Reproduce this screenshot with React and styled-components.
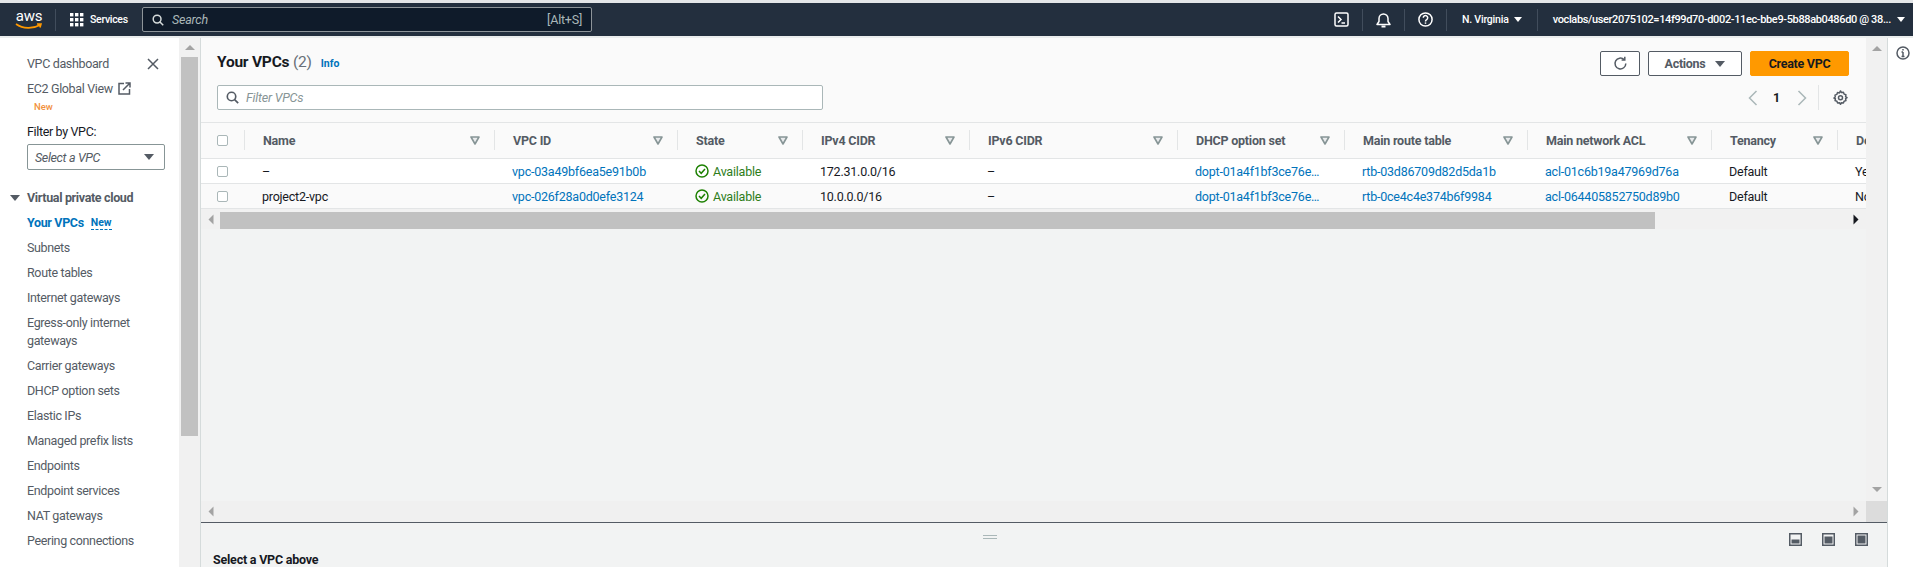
import styled, { createGlobalStyle } from 'styled-components'

const GlobalStyle = createGlobalStyle`
  html, body { margin: 0; padding: 0; overflow: hidden; }
  body { font-family: Roboto, "Liberation Sans", sans-serif; font-size: 12.5px; letter-spacing: -0.22px; color: #16191f; }
  * { box-sizing: border-box; }
`

const COLUMNS = '44px 250px 183px 125px 167px 208px 167px 183px 184px 126px 120px'

const Page = styled.div`
  width: 1913px;
  height: 567px;
  display: flex;
  flex-direction: column;
  overflow: hidden;
  background: #f2f3f3;
`
const TopStrip = styled.div`
  height: 3px;
  background: #e4e6e8;
  flex: none;
`
const Header = styled.header`
  height: 33px;
  flex: none;
  background: #232f3e;
  display: flex;
  align-items: center;
  color: #fff;
  padding-left: 15px;
`
const Logo = styled.div`
  width: 28px;
  height: 22px;
  color: #fff;
  font-size: 15px;
  line-height: 15px;
  text-align: center;
  letter-spacing: -0.3px;
  svg { display: block; margin-top: -1px; }
`
const Divider = styled.span`
  width: 1px;
  height: ${p => p.$h || 22}px;
  background: ${p => p.$color || '#414d5c'};
  margin: ${p => p.$margin || '0'};
  flex: none;
`
const ServicesLabel = styled.span`
  font-size: 10.5px;
  font-weight: 500;
  letter-spacing: -0.3px;
  width: 38px;
  white-space: nowrap;
  margin: 0 14px 0 6px;
`
const SearchBox = styled.div`
  width: 450px;
  height: 25px;
  background: #0f1b2a;
  border: 1px solid #8d9499;
  border-radius: 2px;
  display: flex;
  align-items: center;
  padding: 0 9px;
  color: #aab7b8;
  font-size: 12.5px;
`
const SearchText = styled.span`
  font-style: italic;
  margin-left: 8px;
  flex: 1;
`
const HeaderRight = styled.div`
  margin-left: auto;
  display: flex;
  align-items: center;
  font-weight: 500;
`
const Region = styled.span`
  font-size: 10.5px;
  letter-spacing: -0.2px;
  white-space: nowrap;
`
const Account = styled.span`
  font-size: 11px;
  letter-spacing: -0.36px;
  white-space: nowrap;
`
const Caret = styled.span`
  width: 0;
  height: 0;
  flex: none;
  border-left: ${p => p.$size || 4}px solid transparent;
  border-right: ${p => p.$size || 4}px solid transparent;
  border-top: ${p => (p.$size || 4) + 1}px solid ${p => p.$color || '#fff'};
  margin: ${p => p.$margin || '0'};
`
const LightLine = styled.div`
  height: 2px;
  flex: none;
  background: #eaeded;
`
const Body = styled.div`
  flex: 1;
  display: flex;
  min-height: 0;
`
const Sidebar = styled.nav`
  width: 179px;
  flex: none;
  background: #fff;
  padding: 13px 20px 0 27px;
  color: #545b64;
  font-size: 12.5px;
  letter-spacing: -0.35px;
`
const NavRow = styled.div`
  height: 25px;
  line-height: 25px;
  white-space: nowrap;
  display: flex;
  align-items: center;
  color: ${p => (p.$active ? '#0073bb' : '#545b64')};
  font-weight: ${p => (p.$active ? 700 : 400)};
`
const NavTall = styled.div`
  line-height: 18px;
  padding: 4px 0 3px;
`
const CloseWrap = styled.span`
  margin-left: auto;
  display: flex;
`
const NewTag = styled.div`
  color: #f2913d;
  font-size: 9.5px;
  font-weight: 500;
  letter-spacing: 0;
  margin: -1px 0 0 7px;
  height: 20px;
  line-height: 14px;
`
const FilterLabel = styled.div`
  line-height: 18px;
  margin-top: 3px;
  color: #16191f;
`
const SelectBox = styled.div`
  width: 138px;
  height: 26px;
  margin: 3px 0 15px;
  border: 1px solid #879596;
  border-radius: 2px;
  display: flex;
  align-items: center;
  justify-content: space-between;
  padding: 0 10px 0 7px;
  font-style: italic;
  color: #545b64;
`
const NavSection = styled.div`
  margin-left: -17px;
  display: flex;
  align-items: center;
  height: 25px;
  font-weight: 700;
  color: #545b64;
  gap: 7px;
  white-space: nowrap;
`
const NavNew = styled.span`
  font-size: 10.5px;
  font-weight: 700;
  letter-spacing: 0;
  margin-left: 7px;
  line-height: 13px;
  border-bottom: 1px dashed #0073bb;
`
const SideScroll = styled.div`
  width: 22px;
  flex: none;
  background: #f1f1f1;
  border-right: 1px solid #d5dbdb;
  padding: 0 2px;
`
const ArrowCell = styled.div`
  height: ${p => p.$h || 19}px;
  display: flex;
  align-items: center;
  justify-content: center;
`
const Triangle = styled.span`
  width: 0;
  height: 0;
  border-left: 5px solid transparent;
  border-right: 5px solid transparent;
  border-bottom: 5px solid ${p => p.$color || '#a3a3a3'};
  transform: rotate(${p => p.$rotate || 0}deg);
`
const SideThumb = styled.div`
  height: 379px;
  width: 17px;
  background: #c1c1c1;
`
const Main = styled.main`
  flex: 1;
  min-width: 0;
  display: flex;
  flex-direction: column;
`
const MainScrollArea = styled.div`
  display: flex;
  height: 484px;
  flex: none;
  flex-direction: column;
`
const MainUpper = styled.div`
  height: 463px;
  display: flex;
  flex: none;
`
const Content = styled.div`
  flex: 1;
  min-width: 0;
  display: flex;
  flex-direction: column;
  overflow: hidden;
`
const TableHead = styled.div`
  height: 85px;
  flex: none;
  background: #fafafa;
  border-bottom: 1px solid #e3e5e6;
  padding: 13px 17px 0 16px;
  display: grid;
  grid-template-columns: 1fr auto;
  grid-template-rows: 25px 25px;
  row-gap: 9px;
`
const Title = styled.h1`
  margin: -1px 0 0;
  font-size: 15.5px;
  font-weight: 700;
  line-height: 25px;
  color: #16191f;
  span { font-weight: 400; color: #687078; }
`
const InfoLink = styled.a`
  color: #0073bb;
  font-size: 10.5px;
  font-weight: 700;
  letter-spacing: 0;
  margin-left: 9px;
`
const ActionBar = styled.div`
  display: flex;
  gap: 8px;
`
const Button = styled.button`
  height: 25px;
  width: ${p => p.$w}px;
  border-radius: 2px;
  border: 1px solid ${p => (p.$primary ? '#ff9900' : '#545b64')};
  background: ${p => (p.$primary ? '#ff9900' : '#fff')};
  color: ${p => (p.$primary ? '#16191f' : '#545b64')};
  font: 700 12.5px Roboto, sans-serif;
  letter-spacing: -0.3px;
  display: flex;
  align-items: center;
  justify-content: center;
  padding: 0;
`
const FilterInput = styled.div`
  width: 606px;
  height: 25px;
  background: #fff;
  border: 1px solid #aab7b8;
  border-radius: 2px;
  display: flex;
  align-items: center;
  padding: 0 8px;
  color: #879596;
  font-style: italic;
  gap: 7px;
`
const Pager = styled.div`
  display: flex;
  align-items: center;
  height: 25px;
  padding-right: 1px;
  justify-content: flex-end;
`
const PageNum = styled.span`
  font-weight: 700;
  margin: 0 17px 0 15px;
  color: #16191f;
`
const Row = styled.div`
  display: grid;
  grid-template-columns: ${COLUMNS};
  height: ${p => p.$h}px;
  flex: none;
  width: max-content;
  background: ${p => p.$bg};
  border-bottom: 1px solid #e3e5e6;
`
const HeadCell = styled.div`
  display: flex;
  align-items: center;
  justify-content: space-between;
  padding: 0 15px 0 18px;
  font-weight: 700;
  color: #545b64;
  white-space: nowrap;
  position: relative;
  &::after {
    content: '';
    position: absolute;
    right: 0;
    top: 7px;
    bottom: 8px;
    width: 1px;
    background: #e3e5e6;
    display: ${p => (p.$last ? 'none' : 'block')};
  }
`
const CheckCell = styled(HeadCell)`
  padding-left: 16px;
`
const Cell = styled.div`
  display: flex;
  align-items: center;
  padding-left: ${p => p.$pad ?? 17}px;
  white-space: nowrap;
  overflow: hidden;
  color: ${p => p.$color || '#16191f'};
`
const Checkbox = styled.span`
  width: 11px;
  height: 11px;
  background: #fff;
  border: 1px solid #aab7b8;
  border-radius: 2px;
  display: block;
`
const Status = styled.span`
  display: flex;
  align-items: center;
  gap: 4px;
  color: #2d7d1a;
`
const HScroll = styled.div`
  height: 20px;
  flex: none;
  display: flex;
  background: #f1f1f1;
  align-items: stretch;
`
const HThumb = styled.div`
  width: 1435px;
  margin: 3px 0 0;
  background: #c1c1c1;
`
const ArrowEdge = styled(ArrowCell)`
  width: ${p => (p.$end ? 20 : 19)}px;
  height: auto;
  margin-left: ${p => (p.$end ? 'auto' : '0')};
`
const LowerScroll = styled.div`
  height: 21px;
  flex: 1;
  display: flex;
  background: #f0f0f0;
`
const VScroll = styled.div`
  width: 21px;
  flex: none;
  background: #f1f1f1;
  display: flex;
  flex-direction: column;
  justify-content: space-between;
`
const SplitPanel = styled.section`
  flex: 1;
  position: relative;
  border-top: 1px solid #545b64;
  padding: 28px 0 0 12px;
  font-weight: 700;
  color: #16191f;
  line-height: 18px;
`
const LowerRow = styled.div`
  display: flex;
  height: 21px;
  flex: none;
`
const Corner = styled.div`
  width: 21px;
  background: #dcdcdc;
`
const Handle = styled.div`
  position: absolute;
  top: 12px;
  left: 782px;
  width: 14px;
  height: 4px;
  border-top: 1px solid #aab7b8;
  border-bottom: 1px solid #aab7b8;
`
const PanelIcons = styled.div`
  position: absolute;
  top: 10px;
  right: 19px;
  display: flex;
  gap: 20px;
`
const RightRail = styled.aside`
  width: 26px;
  flex: none;
  background: #fff;
  border-left: 1px solid #d5dbdb;
  padding: 8px 0 0 8px;
`

const SearchIcon = ({ color = '#d5dbdb', size = 12 }) => (
  <svg width={size} height={size} viewBox="0 0 16 16" fill="none" stroke={color} strokeWidth="2" style={{ flex: 'none' }}>
    <circle cx="6.8" cy="6.8" r="5.2" />
    <path d="M10.6 10.6L15 15" />
  </svg>
)

const GridIcon = () => (
  <svg width="14" height="14" viewBox="0 0 14 14" fill="#fff" style={{ flex: 'none' }}>
    {[0, 5, 10].flatMap(y => [0, 5, 10].map(x => <rect key={`${x}-${y}`} x={x} y={y} width="3.4" height="3.4" />))}
  </svg>
)

const TerminalIcon = () => (
  <svg width="15" height="15" viewBox="0 0 15 15" fill="none" stroke="#fff" strokeWidth="1.5">
    <rect x="1" y="1" width="13" height="13" rx="1.5" />
    <path d="M4 4.5L7 7.5 4 10.5M7.5 11H11" />
  </svg>
)

const BellIcon = () => (
  <svg width="15" height="16" viewBox="0 0 15 16" fill="none" stroke="#fff" strokeWidth="1.5">
    <path d="M1 12.5h13L12 9.5V6.5a4.5 4.5 0 0 0-9 0v3z" strokeLinejoin="round" />
    <path d="M5.5 14.5h4" strokeWidth="2" />
  </svg>
)

const HelpIcon = () => (
  <svg width="15" height="15" viewBox="0 0 15 15" fill="none" stroke="#fff" strokeWidth="1.5">
    <circle cx="7.5" cy="7.5" r="6.6" />
    <path d="M5.3 5.8a2.2 2.2 0 1 1 3.4 1.8c-.8.5-1.2 1-1.2 1.9" />
    <path d="M7.5 10.4v1.4" />
  </svg>
)

const CloseIcon = () => (
  <svg width="12" height="12" viewBox="0 0 12 12" stroke="#545b64" strokeWidth="1.5">
    <path d="M1 1l10 10M11 1L1 11" />
  </svg>
)

const ExternalIcon = () => (
  <svg width="13" height="13" viewBox="0 0 13 13" fill="none" stroke="#545b64" strokeWidth="1.5" style={{ marginLeft: 5 }}>
    <path d="M6 1.5H1v10.5h10.5V7" />
    <path d="M5 8l6.5-6.500M7.500 1h4.500v4.500" />
  </svg>
)

const FunnelIcon = () => (
  <svg width="10" height="9" viewBox="0 0 10 9" fill="#e9ebed" stroke="#879596" strokeWidth="1.6" style={{ flex: 'none' }}>
    <path d="M1 1h8L5 8z" strokeLinejoin="round" />
  </svg>
)

const RefreshIcon = () => (
  <svg width="15" height="15" viewBox="0 0 15 15" fill="none" stroke="#545b64" strokeWidth="1.5">
    <path d="M12.800 7.500a5.400 5.400 0 1 1-1.700-3.900" />
    <path d="M11.800 0.800v3.200H8.600" />
  </svg>
)

const GearIcon = () => (
  <svg width="15" height="15" viewBox="0 0 15 15" fill="none" stroke="#545b64" strokeWidth="1.5">
    <path d="M7.500 1l1 1.600 1.900-.3.700 1.800 1.800.7-.3 1.900 1.400 1-1.400 1 .3 1.900-1.800.7-.7 1.800-1.900-.3-1 1.400-1-1.400-1.900.3-.7-1.800-1.800-.7.3-1.900L.9 8l1.400-1-.3-1.900 1.800-.7.700-1.800 1.900.3z" strokeLinejoin="round" />
    <circle cx="7.500" cy="7.800" r="2" />
  </svg>
)

const Chevron = ({ flip }) => (
  <svg width="10" height="16" viewBox="0 0 10 16" fill="none" stroke="#aab7b8" strokeWidth="1.5" style={{ transform: flip ? 'scaleX(-1)' : 'none' }}>
    <path d="M8.500 1L1.500 8l7 7" />
  </svg>
)

const AvailableIcon = () => (
  <svg width="14" height="14" viewBox="0 0 14 14" fill="none" stroke="#1d8102" strokeWidth="1.500">
    <circle cx="7" cy="7" r="6" />
    <path d="M4 7l2.200 2.300L10 5" />
  </svg>
)

const InfoIcon = () => (
  <svg width="14" height="14" viewBox="0 0 14 14" fill="none" stroke="#545b64" strokeWidth="1.500">
    <circle cx="7" cy="7" r="6" />
    <path d="M7 6v4.500M5.500 10.500h3M5.500 6H7" />
    <path d="M7 3v1.500" />
  </svg>
)

const PanelIcon = ({ fillY, fillH }) => (
  <svg width="13" height="13" viewBox="0 0 13 13">
    <rect x="0.750" y="0.750" width="11.500" height="11.500" fill="#f2f3f3" stroke="#545b64" strokeWidth="1.500" />
    <rect x="2.500" y={fillY} width="8" height={fillH} fill="#545b64" />
  </svg>
)

const navItems = ['Subnets', 'Route tables', 'Internet gateways']
const navItemsAfter = [
  'Carrier gateways',
  'DHCP option sets',
  'Elastic IPs',
  'Managed prefix lists',
  'Endpoints',
  'Endpoint services',
  'NAT gateways',
  'Peering connections',
]
const headers = ['Name', 'VPC ID', 'State', 'IPv4 CIDR', 'IPv6 CIDR', 'DHCP option set', 'Main route table', 'Main network ACL', 'Tenancy', 'Default VPC']
const LINK = '#0073bb'
const rows = [
  {
    name: '–',
    id: 'vpc-03a49bf6ea5e91b0b',
    cidr: '172.31.0.0/16',
    route: 'rtb-03d86709d82d5da1b',
    acl: 'acl-01c6b19a47969d76a',
    def: 'Yes',
    bg: '#fff',
  },
  {
    name: 'project2-vpc',
    id: 'vpc-026f28a0d0efe3124',
    cidr: '10.0.0.0/16',
    route: 'rtb-0ce4c4e374b6f9984',
    acl: 'acl-064405852750d89b0',
    def: 'No',
    bg: '#fafafa',
  },
]

const App = () => (
  <Page>
    <GlobalStyle />
    <TopStrip />
    <Header>
      <Logo>
        aws
        <svg width="28" height="7" viewBox="0 0 28 7" fill="none" stroke="#ff9900" strokeWidth="1.600">
          <path d="M1 1c7 5 17 5 24 1M22 1h4l-1 3.500" />
        </svg>
      </Logo>
      <Divider $margin="0 14px 0 12px" />
      <GridIcon />
      <ServicesLabel>Services</ServicesLabel>
      <SearchBox>
        <SearchIcon />
        <SearchText>Search</SearchText>
        <span>[Alt+S]</span>
      </SearchBox>
      <HeaderRight>
        <TerminalIcon />
        <Divider $margin="0 13px" />
        <BellIcon />
        <Divider $margin="0 13px" />
        <HelpIcon />
        <Divider $margin="0 15px 0 13px" />
        <Region>N. Virginia</Region>
        <Caret $margin="0 15px 0 5px" />
        <Divider $margin="0 15px 0 0" />
        <Account>voclabs/user2075102=14f99d70-d002-11ec-bbe9-5b88ab0486d0 @ 38...</Account>
        <Caret $margin="0 8px 0 6px" />
      </HeaderRight>
    </Header>
    <LightLine />
    <Body>
      <Sidebar>
        <NavRow>
          VPC dashboard
          <CloseWrap><CloseIcon /></CloseWrap>
        </NavRow>
        <NavRow>EC2 Global View<ExternalIcon /></NavRow>
        <NewTag>New</NewTag>
        <FilterLabel>Filter by VPC:</FilterLabel>
        <SelectBox>
          Select a VPC
          <Caret $size={5} $color="#545b64" />
        </SelectBox>
        <NavSection>
          <Caret $size={5} $color="#545b64" />
          Virtual private cloud
        </NavSection>
        <NavRow $active>Your VPCs<NavNew>New</NavNew></NavRow>
        {navItems.map(item => <NavRow key={item}>{item}</NavRow>)}
        <NavTall>Egress-only internet<br />gateways</NavTall>
        {navItemsAfter.map(item => <NavRow key={item}>{item}</NavRow>)}
      </Sidebar>
      <SideScroll>
        <ArrowCell $h={19}><Triangle /></ArrowCell>
        <SideThumb />
      </SideScroll>
      <Main>
        <MainScrollArea>
          <MainUpper>
            <Content>
              <TableHead>
                <Title>
                  Your VPCs <span>(2)</span>
                  <InfoLink>Info</InfoLink>
                </Title>
                <ActionBar>
                  <Button $w={40}><RefreshIcon /></Button>
                  <Button $w={94}>
                    Actions
                    <Caret $size={5} $color="#545b64" $margin="0 0 0 10px" />
                  </Button>
                  <Button $w={99} $primary>Create VPC</Button>
                </ActionBar>
                <FilterInput>
                  <SearchIcon color="#545b64" size={13} />
                  Filter VPCs
                </FilterInput>
                <Pager>
                  <Chevron />
                  <PageNum>1</PageNum>
                  <Chevron flip />
                  <Divider $h={25} $color="#e3e5e6" $margin="0 14px 0 11px" />
                  <GearIcon />
                </Pager>
              </TableHead>
              <Row $h={36} $bg="#fafafa">
                <CheckCell><Checkbox /></CheckCell>
                {headers.map(h => (
                  <HeadCell key={h} $last={h === 'Default VPC'}>
                    {h}
                    <FunnelIcon />
                  </HeadCell>
                ))}
              </Row>
              {rows.map(r => (
                <Row key={r.id} $h={25} $bg={r.bg}>
                  <Cell $pad={16}><Checkbox /></Cell>
                  <Cell $pad={17}>{r.name}</Cell>
                  <Cell $color={LINK}>{r.id}</Cell>
                  <Cell><Status><AvailableIcon />Available</Status></Cell>
                  <Cell>{r.cidr}</Cell>
                  <Cell>–</Cell>
                  <Cell $color={LINK}>dopt-01a4f1bf3ce76e…</Cell>
                  <Cell $color={LINK}>{r.route}</Cell>
                  <Cell $color={LINK}>{r.acl}</Cell>
                  <Cell>Default</Cell>
                  <Cell>{r.def}</Cell>
                </Row>
              ))}
              <HScroll>
                <ArrowEdge><Triangle $rotate={-90} /></ArrowEdge>
                <HThumb />
                <ArrowEdge $end><Triangle $rotate={90} $color="#16191f" /></ArrowEdge>
              </HScroll>
            </Content>
            <VScroll>
              <ArrowCell $h={20}><Triangle /></ArrowCell>
              <ArrowCell $h={24}><Triangle $rotate={180} /></ArrowCell>
            </VScroll>
          </MainUpper>
          <LowerRow>
            <LowerScroll>
              <ArrowEdge><Triangle $rotate={-90} /></ArrowEdge>
              <ArrowEdge $end><Triangle $rotate={90} /></ArrowEdge>
            </LowerScroll>
            <Corner />
          </LowerRow>
        </MainScrollArea>
        <SplitPanel>
          <Handle />
          <PanelIcons>
            <PanelIcon fillY={6.500} fillH={4} />
            <PanelIcon fillY={3.500} fillH={7} />
            <PanelIcon fillY={2.500} fillH={8} />
          </PanelIcons>
          Select a VPC above
        </SplitPanel>
      </Main>
      <RightRail><InfoIcon /></RightRail>
    </Body>
  </Page>
)

export default App
